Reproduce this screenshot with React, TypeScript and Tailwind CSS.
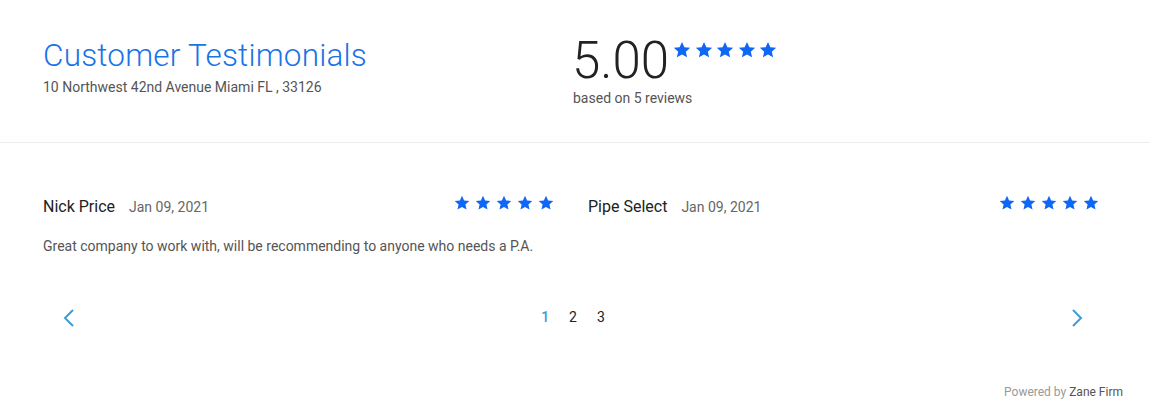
import React from 'react'

const reviews = [
  { name: 'Nick Price', date: 'Jan 09, 2021', text: 'Great company to work with, will be recommending to anyone who needs a P.A.' },
  { name: 'Pipe Select', date: 'Jan 09, 2021', text: '' },
]

function Star({ size }: { size: number }) {
  return (
    <svg width={size} height={size} viewBox="0 0 24 24" fill="#0f67f5">
      <path d="M12 1.2l3.2 7 7.7.8-5.8 5.2 1.7 7.6L12 18 5.2 21.8l1.7-7.6L1.1 9l7.7-.8z" />
    </svg>
  )
}

function Stars({ size, gap }: { size: number; gap: string }) {
  return (
    <div className={`flex ${gap}`}>
      {[0, 1, 2, 3, 4].map((i) => (
        <Star key={i} size={size} />
      ))}
    </div>
  )
}

export default function App() {
  return (
    <div className="min-h-[413px] w-full bg-white font-['Roboto',sans-serif]">
      <header className="flex border-b border-[#ececec] px-[43px] pt-[37px] pb-[34px]">
        <div className="w-[530px]">
          <h1 className="text-[31.5px] leading-[37px] font-light text-[#1a73e8] tracking-[0.2px]">Customer Testimonials</h1>
          <p className="mt-[3px] text-[14px] leading-[20px] text-[#555]">10 Northwest 42nd Avenue Miami FL , 33126</p>
        </div>
        <div>
          <div className="flex items-start">
            <span className="-ml-[1px] text-[51px] leading-[48px] font-light text-[#222]">5.00</span>
            <div className="mt-[4px] ml-[4px]">
              <Stars size={18} gap="gap-[3.5px]" />
            </div>
          </div>
          <p className="mt-[3px] text-[14px] leading-[20px] text-[#555]">based on 5 reviews</p>
        </div>
      </header>

      <section className="grid grid-cols-2 gap-[34px] pl-[43px] pr-[51px] pt-[52px]">
        {reviews.map((r) => (
          <div key={r.name}>
            <div className="flex items-center justify-between">
              <div className="flex items-baseline">
                <span className="text-[16px] leading-[24px] text-[#222]">{r.name}</span>
                <span className="ml-[14px] text-[14px] leading-[24px] text-[#666]">{r.date}</span>
              </div>
              <div className="-mt-[9px]">
                <Stars size={16} gap="gap-[5px]" />
              </div>
            </div>
            {r.text && <p className="mt-[17px] text-[14px] leading-[20px] text-[#555]">{r.text}</p>}
          </div>
        ))}
      </section>

      <nav className="mt-[52px] flex items-center justify-between pl-[62px] pr-[66px]">
        <button className="text-[#3d9bd6]">
          <svg width="14" height="20" viewBox="0 0 14 20" fill="none" stroke="currentColor" strokeWidth="2">
            <path d="M11 2L3 10l8 8" />
          </svg>
        </button>
        <div className="flex gap-[20px] text-[14px] leading-[20px] text-[#222] -mt-[2px]">
          <span className="text-[#3d9bd6] font-medium">1</span>
          <span>2</span>
          <span>3</span>
        </div>
        <button className="text-[#3d9bd6]">
          <svg width="14" height="20" viewBox="0 0 14 20" fill="none" stroke="currentColor" strokeWidth="2">
            <path d="M3 2l8 8-8 8" />
          </svg>
        </button>
      </nav>

      <footer className="mt-[56px] flex justify-end pr-[27px] text-[12px] leading-[16px]">
        <span className="text-[#999]">Powered by&nbsp;</span>
        <span className="text-[#555]">Zane Firm</span>
      </footer>
    </div>
  )
}
